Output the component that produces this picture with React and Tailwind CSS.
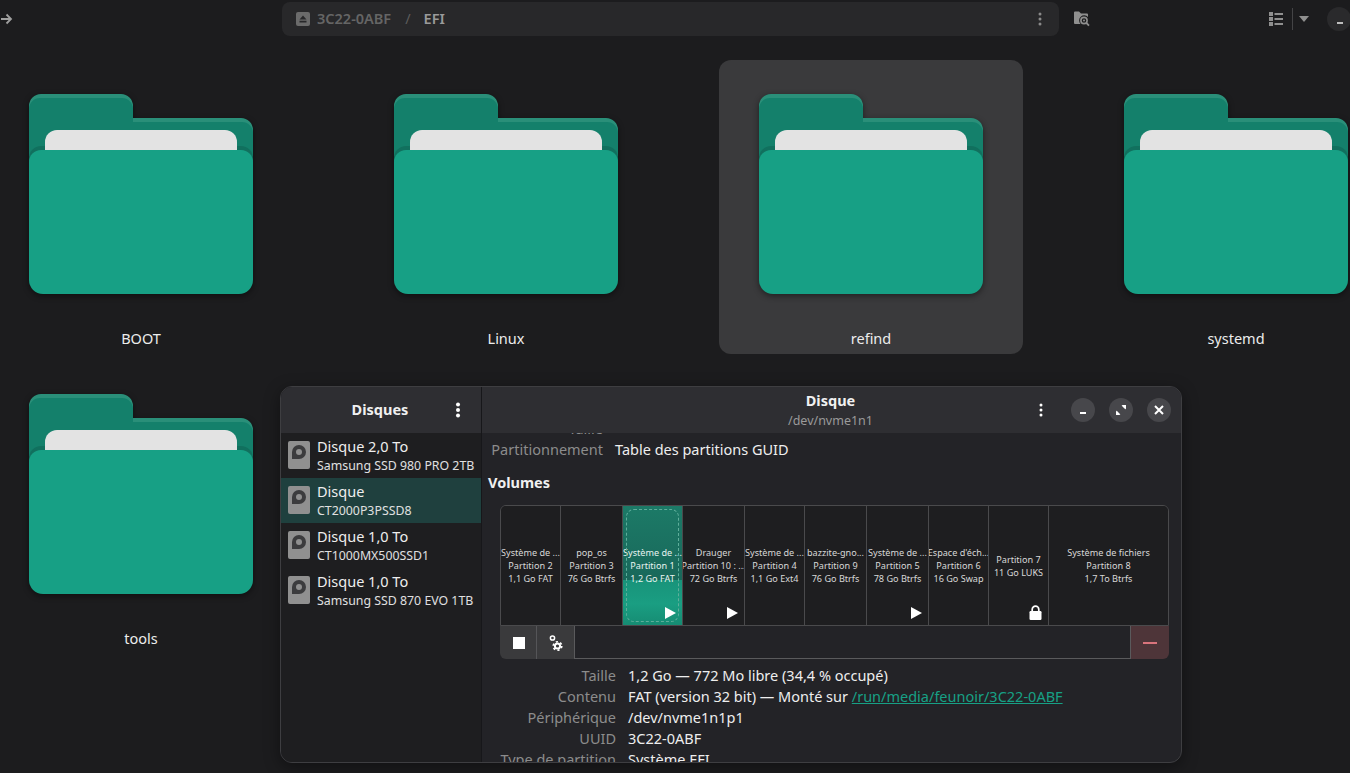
import { Fragment } from 'react'

const folders = ['BOOT', 'Linux', 'refind', 'systemd', 'tools']

const disks = [
  { title: 'Disque 2,0 To', sub: 'Samsung SSD 980 PRO 2TB' },
  { title: 'Disque', sub: 'CT2000P3PSSD8', active: true },
  { title: 'Disque 1,0 To', sub: 'CT1000MX500SSD1' },
  { title: 'Disque 1,0 To', sub: 'Samsung SSD 870 EVO 1TB' },
]

const partitions = [
  { w: 'w-[60px]', lines: ['Système de ...', 'Partition 2', '1,1 Go FAT'] },
  { w: 'w-[62px]', lines: ['pop_os', 'Partition 3', '76 Go Btrfs'] },
  { w: 'w-[60px]', lines: ['Système de ...', 'Partition 1', '1,2 Go FAT'], icon: 'play', active: true },
  { w: 'w-[62px]', lines: ['Drauger', 'Partition 10 : ...', '72 Go Btrfs'], icon: 'play' },
  { w: 'w-[60px]', lines: ['Système de ...', 'Partition 4', '1,1 Go Ext4'] },
  { w: 'w-[62px]', lines: ['bazzite-gno...', 'Partition 9', '76 Go Btrfs'] },
  { w: 'w-[62px]', lines: ['Système de ...', 'Partition 5', '78 Go Btrfs'], icon: 'play' },
  { w: 'w-[60px]', lines: ["Espace d'éch...", 'Partition 6', '16 Go Swap'] },
  { w: 'w-[60px]', lines: ['Partition 7', '11 Go LUKS'], icon: 'lock' },
  { w: 'flex-1', lines: ['Système de fichiers', 'Partition 8', '1,7 To Btrfs'], last: true },
]

const details = [
  { label: 'Taille', value: '1,2 Go — 772 Mo libre (34,4 % occupé)' },
  { label: 'Contenu', value: 'FAT (version 32 bit) — Monté sur ', link: '/run/media/feunoir/3C22-0ABF' },
  { label: 'Périphérique', value: '/dev/nvme1n1p1' },
  { label: 'UUID', value: '3C22-0ABF' },
  { label: 'Type de partition', value: 'Système EFI' },
]

function FolderIcon() {
  return (
    <svg width="224" height="200" viewBox="0 0 224 200" className="block drop-shadow-[0_2px_3px_rgba(0,0,0,0.45)]">
      <path d="M0 60V12A12 12 0 0 1 12 0H92A12 12 0 0 1 104 12V24H212A12 12 0 0 1 224 36V60Z" fill="#2a8f79" />
      <path d="M0 62V15A11 11 0 0 1 11 4H93A11 11 0 0 1 104 15V28H213A11 11 0 0 1 224 39V62Z" fill="#14806b" />
      <rect x="0" y="52" width="224" height="30" rx="12" fill="#11705e" />
      <path d="M16 60V48A12 12 0 0 1 28 36H196A12 12 0 0 1 208 48V60Z" fill="#e3e3e3" />
      <path d="M0 68A12 12 0 0 1 12 56H212A12 12 0 0 1 224 68V186A14 14 0 0 1 210 200H14A14 14 0 0 1 0 186Z" fill="#17a085" />
    </svg>
  )
}

function DiskIcon() {
  return (
    <svg width="22" height="28" viewBox="0 0 22 28" className="shrink-0">
      <rect width="22" height="28" rx="2" fill="#909090" />
      <path d="M4 18V11A7 7 0 1 1 11 18Z" fill="#3c3c3e" />
      <circle cx="11" cy="11" r="3" fill="#909090" />
    </svg>
  )
}

function Kebab({ big }) {
  const r = big ? 2 : 1.5
  return (
    <svg width="6" height="16" viewBox="0 0 6 16">
      <circle cx="3" cy={big ? 2.5 : 3} r={r} fill="currentColor" />
      <circle cx="3" cy="8" r={r} fill="currentColor" />
      <circle cx="3" cy={big ? 13.5 : 13} r={r} fill="currentColor" />
    </svg>
  )
}

function WinButton({ children }) {
  return <div className="w-6 h-6 rounded-full bg-[#47474b] flex items-center justify-center text-white">{children}</div>
}

function Partition({ p }) {
  return (
    <div
      className={`${p.w} relative shrink-0 flex flex-col justify-center items-center text-center overflow-hidden whitespace-nowrap text-[9.1px] leading-[13px] ${
        p.active
          ? 'bg-[linear-gradient(#1c7a67_0,#19685a_62%,#18937a_62%,#1a9e82_82%,#168c73_100%)] text-[#e8f4f1]'
          : 'bg-[#1e1e20] text-[#d8d8d8]'
      } ${p.last ? '' : 'border-r border-[#4a4a4c]'}`}
    >
      {p.active && <div className="absolute inset-x-[3px] top-[3px] bottom-[3px] rounded-lg border border-dashed border-[#5fae9b]" />}
      {p.lines.map((line) => (
        <div key={line}>{line}</div>
      ))}
      {p.icon === 'play' && (
        <svg width="12" height="12" viewBox="0 0 12 12" className="absolute right-[6px] bottom-[6px]">
          <path d="M1 0L12 6L1 12Z" fill="#fff" />
        </svg>
      )}
      {p.icon === 'lock' && (
        <svg width="13" height="15" viewBox="0 0 13 15" className="absolute right-[6px] bottom-[5px]">
          <path d="M3.2 6.5V4.4a3.3 3.3 0 0 1 6.6 0V6.5" fill="none" stroke="#fff" strokeWidth="1.7" />
          <rect x="0.5" y="6" width="12" height="9" rx="1.2" fill="#fff" />
        </svg>
      )}
    </div>
  )
}

export default function App() {
  return (
    <div className="relative w-[1350px] h-[773px] overflow-hidden bg-[#1c1c1e] font-['Noto_Sans',sans-serif] text-white">
      {/* top bar of the file manager */}
      <div className="flex items-center h-[34px] pt-0 mt-[2px] [&>*]:shrink-0">
        <div className="w-[282px] flex items-center text-[#a0a0a0]">
          <svg width="13" height="12" viewBox="0 0 13 12">
            <path d="M1 6H11M6.5 1.5L11 6L6.5 10.5" fill="none" stroke="currentColor" strokeWidth="1.8" />
          </svg>
        </div>
        <div className="w-[777px] h-[34px] rounded-lg bg-[#28282a] flex items-center pl-[14px] pr-[16px] text-[14.5px] font-semibold">
          <svg width="14" height="14" viewBox="0 0 14 14">
            <rect width="14" height="14" rx="2" fill="#6b6b6b" />
            <path d="M7 3.5L10.5 7.5H3.5Z M3.5 8.8H10.5V10.5H3.5Z" fill="#28282a" />
          </svg>
          <span className="ml-[7px] text-[#656565]">3C22-0ABF</span>
          <span className="ml-[14px] text-[#5c5c5c] font-normal">/</span>
          <span className="ml-[13px] text-[#9a9a9a]">EFI</span>
          <div className="ml-auto text-[#8a8a8a] flex"><Kebab /></div>
        </div>
        <svg width="16" height="16" viewBox="0 0 16 16" className="ml-[15px]">
          <path d="M0 1.5A1 1 0 0 1 1 .5H5L7 2.5H13A1 1 0 0 1 14 3.5V6A5 5 0 0 0 6.5 13H1A1 1 0 0 1 0 12Z" fill="#8f8f8f" />
          <circle cx="10" cy="9.5" r="3.1" fill="none" stroke="#8f8f8f" strokeWidth="1.6" />
          <circle cx="10" cy="9.5" r="1" fill="#8f8f8f" />
          <path d="M12.3 11.8L15 14.6" stroke="#8f8f8f" strokeWidth="1.8" />
        </svg>
        <svg width="14" height="14" viewBox="0 0 14 14" className="ml-[179px]">
          <path d="M0 0H4V4H0Z M0 5H4V9H0Z M0 10H4V14H0Z M5.5 1H14V3H5.5Z M5.5 6H14V8H5.5Z M5.5 11H14V13H5.5Z" fill="#8f8f8f" />
        </svg>
        <div className="ml-[9px] w-px h-[22px] bg-[#444446]" />
        <svg width="10" height="6" viewBox="0 0 10 6" className="ml-[6px]">
          <path d="M0 0H10L5 6Z" fill="#8f8f8f" />
        </svg>
        <div className="ml-[18px] w-6 h-6 rounded-full bg-[#2a2a2c] flex items-end justify-center pb-[7px] pl-[1px]">
          <div className="w-[6px] h-[2px] bg-[#bdbdbd]" />
        </div>
      </div>

      {/* folder grid */}
      <div className="mt-[24px] -ml-[11px] grid grid-cols-[repeat(4,304px)] gap-x-[61px] gap-y-[6px] w-[1400px]">
        {folders.map((name) => (
          <div
            key={name}
            className={`h-[294px] rounded-xl pt-[34px] flex flex-col items-center ${name === 'refind' ? 'bg-[#3a3a3c]' : ''}`}
          >
            <FolderIcon />
            <div className="mt-[34px] text-[14.5px] leading-5 text-[#ececec]">{name}</div>
          </div>
        ))}
      </div>

      {/* GNOME Disks window over the desktop */}
      <div className="absolute left-[280px] top-[386px] w-[902px] h-[377px] rounded-xl border border-[#3e3e41] bg-[#232327] overflow-hidden flex shadow-[0_4px_16px_rgba(0,0,0,0.4)]">
        <div className="w-[201px] shrink-0 border-r border-[#17171a] flex flex-col bg-[#1e1e20]">
          <div className="h-[46px] shrink-0 bg-[#2e2e32] flex items-center relative">
            <div className="w-full text-center text-[14.5px] font-bold pr-[5px] pl-[3px] text-[#f0f0f0]">Disques</div>
            <div className="absolute right-[20px] top-[15px] text-white flex"><Kebab big /></div>
          </div>
          {disks.map((d) => (
            <div
              key={d.sub}
              className={`h-[45px] shrink-0 flex items-start gap-[7px] pl-[7px] pt-[8px] ${d.active ? 'bg-[#1f403e]' : ''}`}
            >
              <DiskIcon />
              <div className="-mt-[5px] whitespace-nowrap">
                <div className="text-[14.5px] leading-[20px] text-[#eeeeee]">{d.title}</div>
                <div className="mt-px text-[12.35px] leading-[18px] text-[#e0e0e0]">{d.sub}</div>
              </div>
            </div>
          ))}
        </div>

        <div className="flex-1 flex flex-col min-w-0">
          <div className="h-[46px] shrink-0 bg-[#2e2e32] flex items-center relative">
            <div className="absolute left-0 right-[2px] top-[3px] text-center">
              <div className="text-[14.5px] font-bold leading-5 text-[#f0f0f0]">Disque</div>
              <div className="mt-px text-[12.5px] leading-5 text-[#9a9a9a]">/dev/nvme1n1</div>
            </div>
            <div className="ml-auto flex items-center pr-[10px]">
              <div className="flex text-white mr-[27px]"><Kebab /></div>
              <div className="flex gap-[14px]">
                <WinButton>
                  <div className="w-[6px] h-[2px] bg-white mt-[6px]" />
                </WinButton>
                <WinButton>
                  <svg width="10" height="10" viewBox="0 0 10 10">
                    <path d="M5.5 0H10V4.5Z M0 5.5V10H4.5Z M6 1H9V4M1 6V9H4" fill="#fff" />
                  </svg>
                </WinButton>
                <WinButton>
                  <svg width="10" height="10" viewBox="0 0 10 10">
                    <path d="M1 1L9 9M9 1L1 9" stroke="#fff" strokeWidth="2" />
                  </svg>
                </WinButton>
              </div>
            </div>
          </div>

          <div className="flex-1 overflow-hidden">
            <div className="-mt-[15px]">
              {[['Taille', ''], ['Partitionnement', 'Table des partitions GUID']].map(([label, value]) => (
                <div key={label} className="flex h-[21px] items-center text-[14.5px] whitespace-nowrap">
                  <div className="w-[121px] text-right text-[#8c8c8c]">{label}</div>
                  <div className="ml-[12px] text-[#eeeeee]">{value}</div>
                </div>
              ))}
              <div className="mt-[12px] ml-[6px] text-[14.5px] leading-5 font-bold text-[#f0f0f0]">Volumes</div>

              <div className="mt-[13px] ml-[18px] w-[669px]">
                <div className="flex h-[121px] rounded-t-md border border-[#4a4a4c] overflow-hidden">
                  {partitions.map((p) => (
                    <Partition key={p.lines[0] + p.lines[1]} p={p} />
                  ))}
                </div>
                <div className="flex h-[33px]">
                  <div className="w-[37px] bg-[#3a3a3c] rounded-bl-md flex items-center justify-center border-r border-[#555558] pl-px">
                    <div className="w-3 h-3 bg-white" />
                  </div>
                  <div className="w-[37px] bg-[#3a3a3c] flex items-center justify-center">
                    <svg width="14" height="16" viewBox="0 0 14 16">
                      <circle cx="3.5" cy="3" r="2.1" fill="none" stroke="#fff" strokeWidth="1.5" />
                      <circle cx="8.5" cy="11" r="2.6" fill="none" stroke="#fff" strokeWidth="2" />
                      <circle cx="8.5" cy="11" r="4.3" fill="none" stroke="#fff" strokeWidth="1.6" strokeDasharray="2.2 2.3" />
                    </svg>
                  </div>
                  <div className="flex-1 border border-t-0 border-[#5a5a5c] bg-[#232327]" />
                  <div className="w-[38px] bg-[#4e3539] rounded-br-md flex items-center justify-center">
                    <div className="w-[14px] h-[2px] bg-[#d9747c]" />
                  </div>
                </div>
              </div>

              <div className="mt-[6px] grid grid-cols-[134px_1fr] gap-x-[12px] text-[14.5px] leading-[21px] whitespace-nowrap">
                {details.map((d) => (
                  <Fragment key={d.label}>
                    <div className="text-right text-[#8c8c8c]">{d.label}</div>
                    <div className="text-[#eeeeee]">
                      {d.value}
                      {d.link && <span className="text-[#17a085] underline">{d.link}</span>}
                    </div>
                  </Fragment>
                ))}
              </div>
            </div>
          </div>
        </div>
      </div>
    </div>
  )
}
